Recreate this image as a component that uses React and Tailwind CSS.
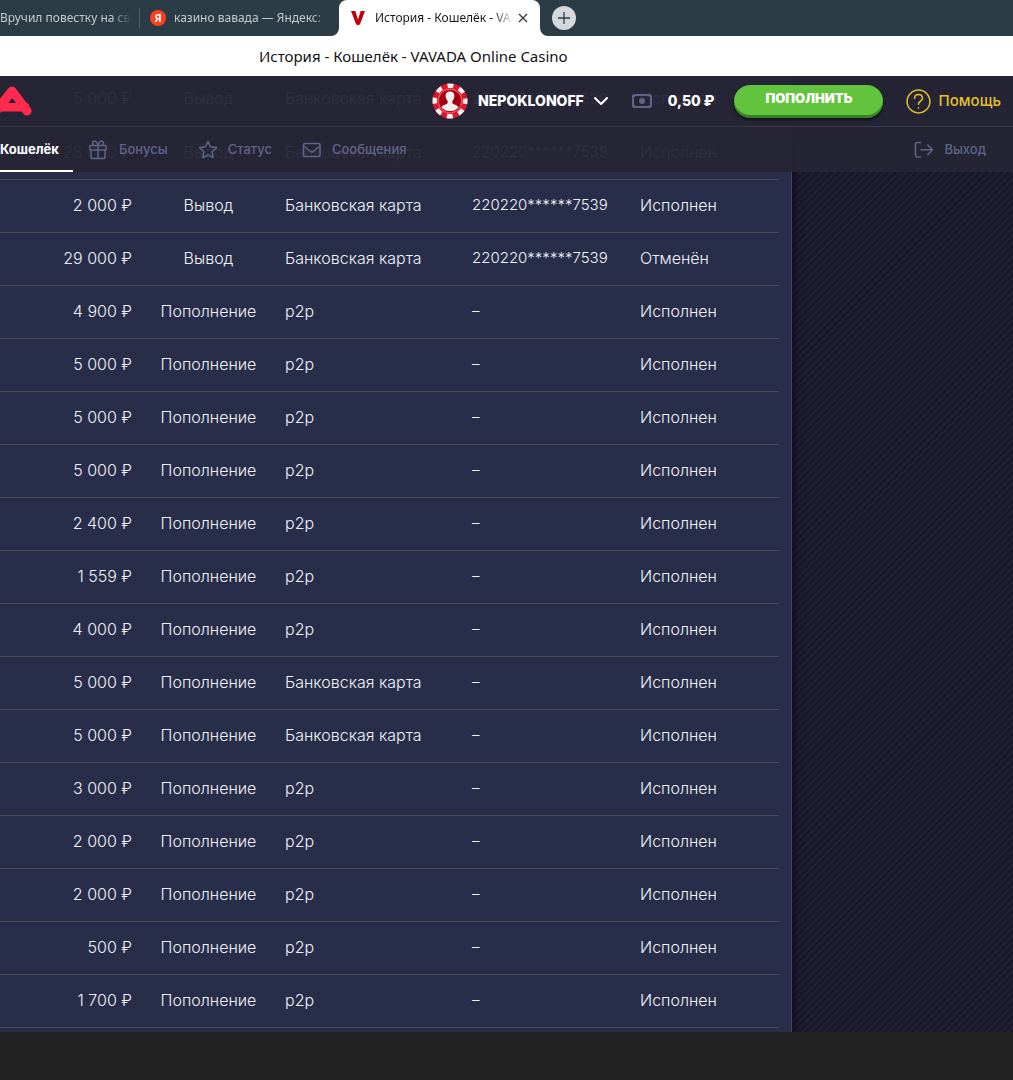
import React from "react";

const transactions = [
    { amount: "5 000 ₽", type: "Вывод", method: "Банковская карта", account: "220220******7539", status: "Исполнен" },
    { amount: "28 000 ₽", type: "Вывод", method: "Банковская карта", account: "220220******7539", status: "Исполнен" },
    { amount: "2 000 ₽", type: "Вывод", method: "Банковская карта", account: "220220******7539", status: "Исполнен" },
    { amount: "29 000 ₽", type: "Вывод", method: "Банковская карта", account: "220220******7539", status: "Отменён" },
    { amount: "4 900 ₽", type: "Пополнение", method: "p2p", account: "–", status: "Исполнен" },
    { amount: "5 000 ₽", type: "Пополнение", method: "p2p", account: "–", status: "Исполнен" },
    { amount: "5 000 ₽", type: "Пополнение", method: "p2p", account: "–", status: "Исполнен" },
    { amount: "5 000 ₽", type: "Пополнение", method: "p2p", account: "–", status: "Исполнен" },
    { amount: "2 400 ₽", type: "Пополнение", method: "p2p", account: "–", status: "Исполнен" },
    { amount: "1 559 ₽", type: "Пополнение", method: "p2p", account: "–", status: "Исполнен" },
    { amount: "4 000 ₽", type: "Пополнение", method: "p2p", account: "–", status: "Исполнен" },
    { amount: "5 000 ₽", type: "Пополнение", method: "Банковская карта", account: "–", status: "Исполнен" },
    { amount: "5 000 ₽", type: "Пополнение", method: "Банковская карта", account: "–", status: "Исполнен" },
    { amount: "3 000 ₽", type: "Пополнение", method: "p2p", account: "–", status: "Исполнен" },
    { amount: "2 000 ₽", type: "Пополнение", method: "p2p", account: "–", status: "Исполнен" },
    { amount: "2 000 ₽", type: "Пополнение", method: "p2p", account: "–", status: "Исполнен" },
    { amount: "500 ₽", type: "Пополнение", method: "p2p", account: "–", status: "Исполнен" },
    { amount: "1 700 ₽", type: "Пополнение", method: "p2p", account: "–", status: "Исполнен" },
];

// Icons
function GiftIcon() {
    return (
        <svg width="18" height="20" viewBox="0 0 18 20" fill="none" stroke="currentColor" strokeWidth="1.5" strokeLinejoin="round" aria-hidden="true">
            <rect x="0.8" y="5.5" width="16.4" height="4.5" rx="1" />
            <path d="M2 10v7.2q0 1.3 1.3 1.3h11.4q1.3 0 1.3-1.3V10M9 5.5v13" />
            <path d="M9 5.2C7.5 1 5.8.8 4.8 1.2 3 2 3 5 5 5.3M9 5.2C10.5 1 12.2.8 13.2 1.2 15 2 15 5 13 5.3" />
        </svg>
    );
}

function StarIcon() {
    return (
        <svg width="20" height="20" viewBox="0 0 20 20" fill="none" stroke="currentColor" strokeWidth="1.5" strokeLinejoin="round" aria-hidden="true">
            <path d="M10 1.5l2.5 5.3 6 .8-4.4 4.1 1.1 5.9L10 14.8l-5.2 2.8 1.1-5.9L1.5 7.6l6-.8z" />
        </svg>
    );
}

function MailIcon() {
    return (
        <svg width="20" height="16" viewBox="0 0 20 16" fill="none" stroke="currentColor" strokeWidth="1.6" strokeLinejoin="round" aria-hidden="true">
            <rect x="1.5" y="1.5" width="16.5" height="13" rx="1.5" />
            <path d="M2.3 4.5l6 5q1.5 1 3 0l6-5" />
        </svg>
    );
}

function ExitIcon() {
    return (
        <svg width="20" height="18" viewBox="0 0 20 18" fill="none" stroke="currentColor" strokeWidth="1.6" strokeLinecap="round" strokeLinejoin="round" aria-hidden="true">
            <path d="M6.5 1.5H3Q1.5 1.5 1.5 3v11.5Q1.5 16 3 16h3.5M7 8.8h11.5M13.8 4l4.7 4.8-4.7 4.8" />
        </svg>
    );
}

function CashIcon() {
    return (
        <svg width="20" height="14" viewBox="0 0 20 14" fill="none" aria-hidden="true">
            <rect x="1" y="1" width="18" height="12" rx="1.5" stroke="#5f6488" strokeWidth="2" />
            <path d="M1 1h4L1 4zM19 1v3l-4-3zM1 13v-3l4 3zM19 13h-4l4-3z" fill="#5f6488" />
            <circle cx="10" cy="7" r="3" fill="#5f6488" />
        </svg>
    );
}

function HelpIcon() {
    return (
        <svg width="25" height="25" viewBox="0 0 25 25" fill="none" stroke="currentColor" strokeWidth="1.5" strokeLinecap="round" aria-hidden="true">
            <circle cx="12.5" cy="12.5" r="11.4" />
            <path d="M8.5 9.5c0-2.4 1.7-4 4-4s4 1.6 4 3.8c0 2.8-4 3-4 6M12.5 18.7v.4" />
        </svg>
    );
}

// Casino chip with a silhouette in the middle
function ChipAvatar() {
    return (
        <svg width="36" height="36" viewBox="0 0 36 36" aria-hidden="true">
            <circle cx="18" cy="18" r="17.5" fill="#e0162f" />
            <circle cx="18" cy="18" r="15.3" fill="none" stroke="#f4f1f1" strokeWidth="4.4" strokeDasharray="6 6.017" strokeDashoffset="3" />
            <circle cx="18" cy="18" r="12.8" fill="#e51d35" />
            <circle cx="18" cy="18" r="11.8" fill="none" stroke="#f5b9bd" strokeWidth="0.8" strokeDasharray="1.5 1" />
            <circle cx="18" cy="18" r="10.8" fill="#a5000d" />
            <path d="M18 8.5c-3.3 0-4.7 2.2-4.3 5.2.2 2 1.1 3.4 2 4.3v2c-.8 1.6-5.2 1.7-6.2 4.4Q13 28 18 28t8.5-3.6c-1-2.7-5.4-2.8-6.2-4.4v-2c.9-.9 1.8-2.3 2-4.3.4-3-1-5.2-4.300-5.200z" fill="#f3f0f0" />
        </svg>
    );
}

// Browser tab strip
function BrowserTabs() {
    return (
        <div className="bg-white font-['Noto_Sans',sans-serif]">
            <div className="flex h-9 items-stretch overflow-hidden bg-white text-xs whitespace-nowrap">
                <div className="flex w-[339px] shrink-0 items-center rounded-br-lg bg-[#2c3c46] text-[#c3c9cc]">
                    <button className="w-[131px] overflow-hidden mask-r-from-85% text-left">Вручил повестку на св</button>
                    <span className="ml-2 h-5 w-px bg-[#50606a]" />
                    <button className="ml-2.5 flex w-[180px] items-center gap-2 overflow-hidden mask-r-from-90%">
                        <span className="flex size-4 shrink-0 items-center justify-center rounded-full bg-[#fc3f1d] text-[11px] leading-4 font-bold text-white">Я</span>
                        <span>казино вавада — Яндекс:</span>
                    </button>
                </div>
                <div className="w-[201px] shrink-0 bg-[#2c3c46]">
                    <div className="flex h-9 items-center rounded-t-lg bg-white px-3 text-[#16181c]">
                        <svg width="14" height="15" viewBox="0 0 16 17" fill="none" aria-hidden="true">
                            <path d="M0 0h5l3 9.5L11 0h5l-5.5 14.5q-.7 1.7-2.5 1.7t-2.5-1.7z" fill="#c40009" />
                        </svg>
                        <button className="ml-2.5 w-[139px] overflow-hidden mask-r-from-85% text-left">История - Кошелёк - VA</button>
                        <button aria-label="Закрыть вкладку" className="ml-1">
                            <svg width="10" height="10" viewBox="0 0 10 10" stroke="#33383f" strokeWidth="1.3" aria-hidden="true">
                                <path d="M1 1l8 8M9 1L1 9" />
                            </svg>
                        </button>
                    </div>
                </div>
                <div className="flex grow items-center rounded-bl-lg bg-[#2c3c46] pl-3">
                    <button aria-label="Новая вкладка" className="flex size-6 items-center justify-center rounded-full bg-[#d5d8da]">
                        <svg width="12" height="12" viewBox="0 0 12 12" stroke="#2c3c46" strokeWidth="1.3" aria-hidden="true">
                            <path d="M6 0v12M0 6h12" />
                        </svg>
                    </button>
                </div>
            </div>
            <p className="h-10 pl-[259px] text-[15px] leading-10 text-[#111]">История - Кошелёк - VAVADA Online Casino</p>
        </div>
    );
}

// Site header, lies over the scrolled history
function SiteHeader() {
    return (
        <header className="absolute inset-x-0 top-0 z-10 bg-[#262535]/95">
            <div className="flex h-[51px] items-center border-b border-[#3a394b] pr-3">
                <svg width="32" height="32" viewBox="0 0 32 32" fill="none" className="mr-[400px] shrink-0" aria-hidden="true">
                    <path d="M-4 26L12 6l15 20M1 22h24" stroke="#ff2a4d" strokeWidth="9" strokeLinecap="round" strokeLinejoin="round" />
                    <path d="M12.5 13.5l-3.5 4.5h7z" fill="#262535" />
                </svg>
                <button className="flex items-center">
                    <ChipAvatar />
                    <span className="ml-2.5 text-sm font-extrabold text-white">NEPOKLONOFF</span>
                    <svg width="14" height="10" viewBox="0 0 14 10" fill="none" stroke="white" strokeWidth="2" strokeLinecap="round" strokeLinejoin="round" className="ml-2.5" aria-hidden="true">
                        <path d="M1 2l6 6 6-6" />
                    </svg>
                </button>
                <div className="ml-6 flex items-center gap-4">
                    <CashIcon />
                    <span className="text-sm font-extrabold text-white">0,50 ₽</span>
                </div>
                <button className="ml-5 h-8 w-[149px] rounded-full bg-[#62c33c] pb-1 text-[13px] font-black text-white shadow-[0_1px_0_#397f2a,inset_0_-2px_0_#397f2a,0_3px_3px_#11111a]">
                    ПОПОЛНИТЬ
                </button>
                <a href="#help" className="ml-auto flex items-center gap-2 text-[15px] font-medium text-[#e3c02f]">
                    <HelpIcon />
                    Помощь
                </a>
            </div>
            <nav className="flex h-[45px] text-[13px] font-medium text-[#5f6488]">
                <a href="#wallet" className="w-[73px] border-b-2 border-white leading-[45px] font-bold text-white">Кошелёк</a>
                <a href="#bonus" className="ml-4 flex items-center gap-3"><GiftIcon />Бонусы</a>
                <a href="#status" className="ml-[30px] flex items-center gap-2.5"><StarIcon />Статус</a>
                <a href="#messages" className="ml-[30px] flex items-center gap-2.5"><MailIcon />Сообщения</a>
                <a href="#exit" className="mr-[27px] ml-auto flex items-center gap-2.5"><ExitIcon />Выход</a>
            </nav>
        </header>
    );
}

function HistoryTable() {
    return (
        <table className="-mt-[3px] w-full table-fixed text-[#f1f2f6]">
            <colgroup>
                <col className="w-[146px]" />
                <col className="w-[125px]" />
                <col className="w-[187px]" />
                <col className="w-[168px]" />
                <col />
            </colgroup>
            <tbody>
                {transactions.map((item, index) => (
                    <tr key={index} className="h-[53px] border-b border-[#4b4a50] whitespace-nowrap">
                        <td className="px-3.5 pb-0.5 text-right">{item.amount}</td>
                        <td className="pb-0.5 text-center">{item.type}</td>
                        <td className="px-3.5 pb-0.5">{item.method}</td>
                        <td className="px-3.5 text-[15px]">{item.account}</td>
                        <td className="px-3.5 pb-0.5">{item.status}</td>
                    </tr>
                ))}
            </tbody>
        </table>
    );
}

export default function App() {
    return (
        <div className="flex min-h-screen flex-col bg-[#212221]">
            <BrowserTabs />
            <div className="relative overflow-hidden bg-[repeating-linear-gradient(135deg,#18172c_0px,#18172c_2px,#211f31_3px,#211f31_5px)] font-[Inter,sans-serif]">
                <SiteHeader />
                <main className="w-full max-w-[792px] border-r border-[#3b4668] bg-[#282e4a] pr-3 pb-1 text-base font-light shadow-[2px_0_8px_#0c0c18]">
                    <HistoryTable />
                </main>
            </div>
        </div>
    );
}
